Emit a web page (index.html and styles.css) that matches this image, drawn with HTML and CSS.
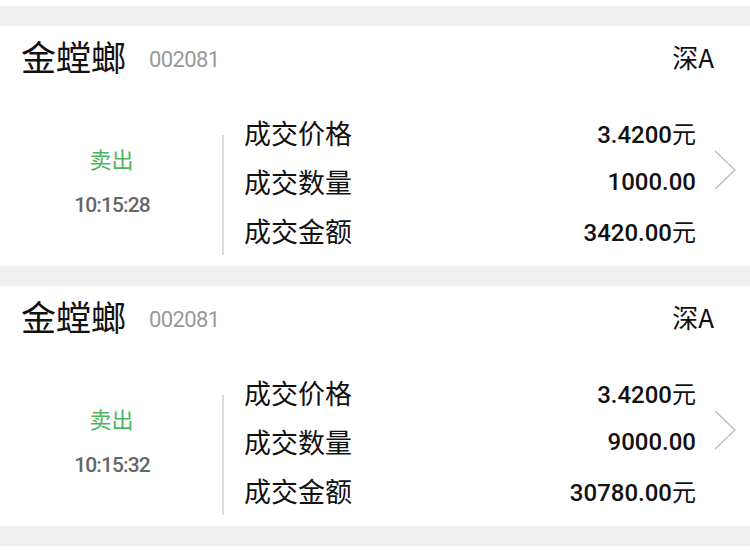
FILE: index.html
```html
<!DOCTYPE html>
<html lang="zh-CN">
<head>
<meta charset="utf-8">
<link rel="stylesheet" href="styles.css">
</head>
<body>
<div class="list">
  <div class="card">
    <div class="head">
      <span class="name">金螳螂</span>
      <span class="code">002081</span>
      <span class="market">深A</span>
    </div>
    <div class="body">
      <div class="side">
        <div class="action">卖出</div>
        <div class="time">10:15:28</div>
      </div>
      <div class="rows">
        <div class="row"><span class="label">成交价格</span><span class="value">3.4200<span class="unit">元</span></span></div>
        <div class="row"><span class="label">成交数量</span><span class="value">1000.00</span></div>
        <div class="row"><span class="label">成交金额</span><span class="value">3420.00<span class="unit">元</span></span></div>
      </div>
      <svg class="chev" width="22" height="40" viewBox="0 0 22 40"><polyline points="1,1 21,20 1,39" fill="none" stroke="#bdbdbd" stroke-width="1.4"/></svg>
    </div>
  </div>
  <div class="card">
    <div class="head">
      <span class="name">金螳螂</span>
      <span class="code">002081</span>
      <span class="market">深A</span>
    </div>
    <div class="body">
      <div class="side">
        <div class="action">卖出</div>
        <div class="time">10:15:32</div>
      </div>
      <div class="rows">
        <div class="row"><span class="label">成交价格</span><span class="value">3.4200<span class="unit">元</span></span></div>
        <div class="row"><span class="label">成交数量</span><span class="value">9000.00</span></div>
        <div class="row"><span class="label">成交金额</span><span class="value">30780.00<span class="unit">元</span></span></div>
      </div>
      <svg class="chev" width="22" height="40" viewBox="0 0 22 40"><polyline points="1,1 21,20 1,39" fill="none" stroke="#bdbdbd" stroke-width="1.4"/></svg>
    </div>
  </div>
</div>
</body>
</html>
```
FILE: styles.css
```css
html, body {
  margin: 0;
  background: #fff;
}
body {
  padding-top: 6px;
  font-family: Roboto, "Noto Sans CJK SC", sans-serif;
  color: #111;
}
.list {
  background: #efefef;
  padding: 20px 0;
  display: flex;
  flex-direction: column;
  gap: 20px;
}
.card {
  background: #fff;
  height: 240px;
  display: flex;
  flex-direction: column;
}
.head {
  height: 60px;
  display: flex;
  align-items: center;
  padding: 0 36px 0 21px;
}
.name {
  font-family: "Noto Sans CJK SC", sans-serif;
  font-size: 35px;
  line-height: 40px;
  color: #111;
}
.code {
  margin-left: 23px;
  margin-top: 6px;
  font-family: Roboto, sans-serif;
  font-size: 22px;
  letter-spacing: -0.6px;
  color: #999;
}
.market {
  margin-left: auto;
  font-family: "Noto Sans CJK SC", sans-serif;
  font-size: 26px;
  color: #111;
}
.body {
  flex: 1;
  display: flex;
  align-items: flex-start;
}
.side {
  width: 224px;
  height: 120px;
  margin-top: 49px;
  border-right: 2px solid #dcdcdc;
  display: flex;
  flex-direction: column;
  align-items: center;
  padding-top: 8px;
  box-sizing: border-box;
}
.action {
  font-family: "Noto Sans CJK SC", sans-serif;
  font-size: 22px;
  line-height: 30px;
  color: #4cb65e;
  padding-left: 1px;
}
.time {
  margin-top: 17px;
  font-family: Roboto, sans-serif;
  font-weight: 500;
  font-size: 21px;
  line-height: 30px;
  letter-spacing: -0.9px;
  color: #666;
  padding-left: 2px;
}
.rows {
  flex: 1;
  margin-top: 22px;
  padding-left: 20px;
}
.row {
  height: 49px;
  display: flex;
  align-items: center;
  justify-content: space-between;
}
.label {
  font-family: "Noto Sans CJK SC", sans-serif;
  font-size: 27px;
  color: #111;
}
.value {
  font-family: Roboto, sans-serif;
  font-weight: 500;
  font-size: 24px;
  color: #111;
}
.unit {
  font-family: "Noto Sans CJK SC", sans-serif;
  font-weight: 400;
  font-size: 24px;
}
.chev {
  flex: none;
  margin: 64px 14px 0 18px;
}
```
